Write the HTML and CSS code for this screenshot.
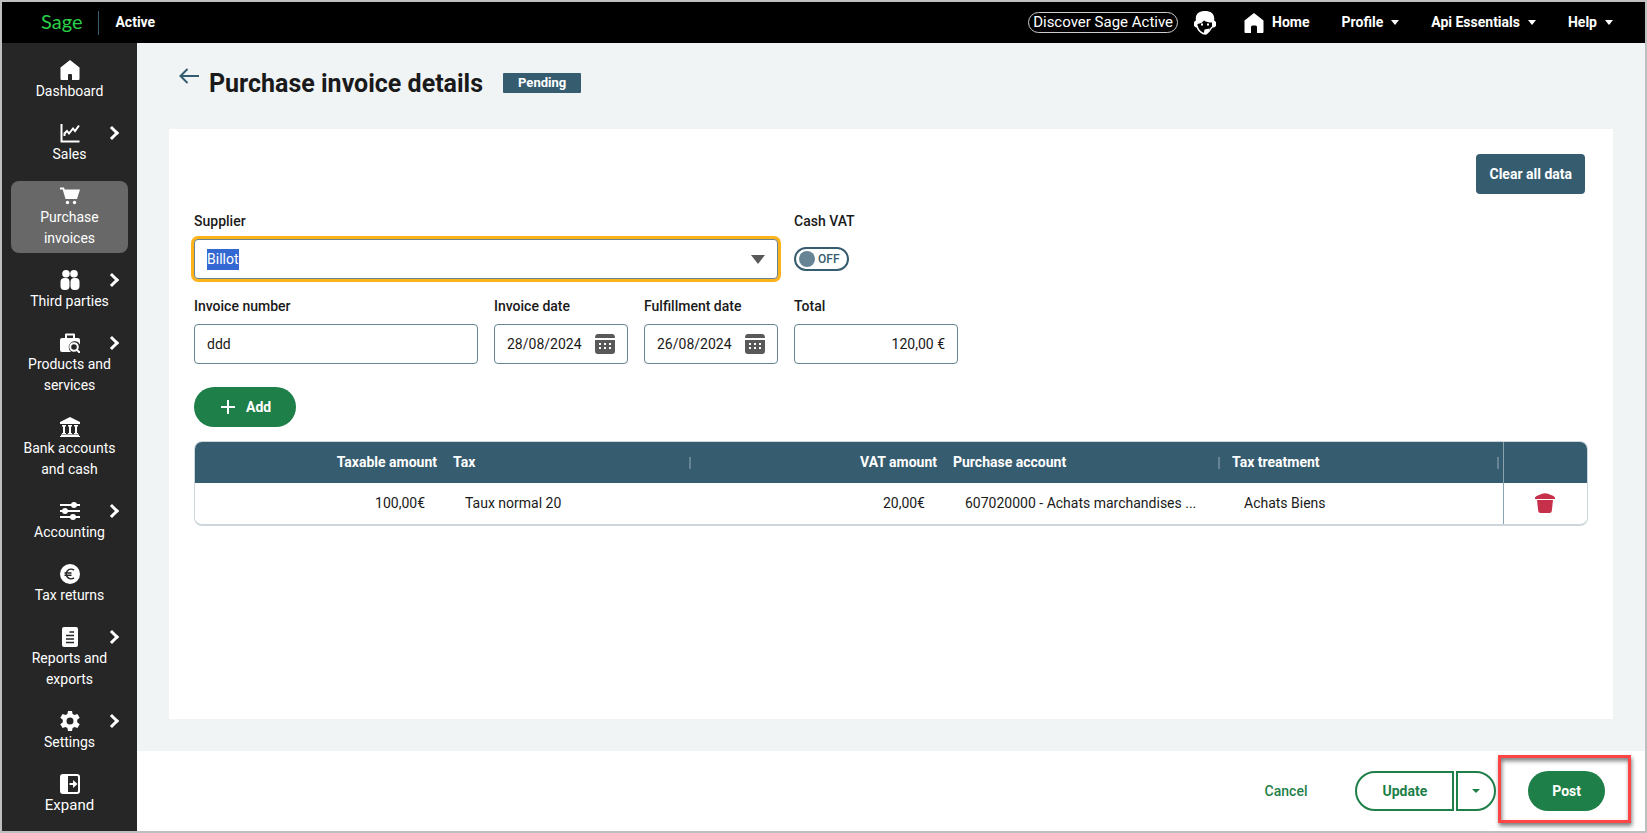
FILE: index.html
```html
<!DOCTYPE html>
<html lang="en">
<head>
<meta charset="utf-8">
<title>Purchase invoice details</title>
<link rel="stylesheet" href="styles.css">
</head>
<body>
<div class="app">
  <header class="topbar">
    <a class="logo" href="#">Sage</a>
    <span class="product">Active</span>
    <nav class="topnav" aria-label="Account">
      <a class="discover" href="#">Discover Sage Active</a>
      <button class="agent" type="button" aria-label="Support">
        <svg width="22" height="24" viewBox="0 0 22 24"><path fill="#fff" d="M11 0C5.500 0 2 2.500 1.800 7v2.500L0 11v4l2 1.500h1.500V13c3-.3 5-1.500 6.500-3.500 2 1.500 5 2 8 2V16.500H20l2-1.500v-4l-1.800-1.500V7C20 2.500 16.500 0 11 0z"/><path fill="none" stroke="#fff" stroke-width="1.500" d="M3 15c1 4 3 6 6 7.500h3c3-1.500 4.500-3.500 6-6.500"/><path fill="#fff" d="M7 12.500h2v2H7zM13 12.500h2v2h-2zM10.500 18.500l5-1v3l-3 3h-3z"/></svg>
      </button>
      <a class="toplink home" href="#"><svg width="20" height="20" viewBox="0 0 20 20"><path d="M10 0 .5 7.500V19q0 1 1 1H7v-6q0-1.500 1.500-1.500h3Q13 12.500 13 14v6h5.500q1 0 1-1V7.500z" fill="#fff"/></svg>Home</a>
      <button class="toplink menu" type="button">Profile</button>
      <button class="toplink menu" type="button">Api Essentials</button>
      <button class="toplink menu" type="button">Help</button>
    </nav>
  </header>
  <div class="body">
    <nav class="sidebar" aria-label="Main">
      <a class="item" href="#"><svg class="icon" viewBox="0 0 20 20"><path d="M10 0 .5 7.500V19q0 1 1 1H8v-5q0-1 1-1h2q1 0 1 1v5h6.500q1 0 1-1V7.500z"/></svg>Dashboard</a>
      <a class="item more" href="#"><svg class="icon" viewBox="0 0 20 20"><path class="line" d="M1.500 1v17.500h18M4.500 13V10.500l2.500-2.500 2 2.500 4-5 2 2.500 4-5.500"/></svg>Sales</a>
      <a class="item active" href="#" aria-current="page"><svg class="icon" viewBox="0 0 20 20"><path d="M0 1.500h4l.7 2H20L17 13H5.500L2.700 3.500H0z"/><circle cx="7.500" cy="16.500" r="1.700"/><circle cx="14.500" cy="16.500" r="1.700"/></svg>Purchase<br>invoices</a>
      <a class="item more" href="#"><svg class="icon" viewBox="0 0 20 20"><circle cx="6" cy="3.800" r="3.800"/><circle cx="14" cy="3.800" r="3.800"/><path d="M.5 12q0-4 4-4h1.500q3.500 0 3.500 4v4q0 4-4 4h-1q-4 0-4-4zM10.500 12q0-4 4-4h1q4 0 4 4v4q0 4-4 4h-1q-4 0-4-4z"/></svg>Third parties</a>
      <a class="item more" href="#"><svg class="icon" viewBox="0 0 20 20"><path fill-rule="evenodd" d="M5 5V1.500Q5 .5 6 .5h8q1 0 1 1V5h3q2 0 2 2v4.500A6 6 0 1 0 11 19H2q-2 0-2-2V7q0-2 2-2zm2 0h6V2.500H7z"/><circle class="line" cx="14" cy="14" r="3.800"/><path class="line" d="m17 17 3 3"/></svg>Products and<br>services</a>
      <a class="item" href="#"><svg class="icon" viewBox="0 0 20 20"><path d="M10 0 20 5v2H0V5zM2 8h4v1.500H5V16h1v1H2v-1h1V9.500H2zm6 0h4v1.500h-1V16h1v1H8v-1h1V9.500H8zm6 0h4v1.500h-1V16h1v1h-4v-1h1V9.500h-1zM1 17.500h18V19h1v1H0v-1h1z"/></svg>Bank accounts<br>and cash</a>
      <a class="item more" href="#"><svg class="icon" viewBox="0 0 20 20"><path class="line" d="M0 4h20M0 10h20M0 16h20"/><circle cx="14" cy="4" r="3"/><circle cx="5" cy="10" r="3"/><circle cx="13" cy="16" r="3"/></svg>Accounting</a>
      <a class="item" href="#"><svg class="icon" viewBox="0 0 20 20"><circle cx="10" cy="10" r="10"/><path class="cut" d="M14 6.200A4.800 4.800 0 1 0 14 13.800M4.500 9h7M4.500 11.300h7"/></svg>Tax returns</a>
      <a class="item more" href="#"><svg class="icon" viewBox="0 0 20 20"><rect x="2" width="16" height="20" rx="2"/><path class="cut" d="M9.500 5H14M6 8.500h8M6 12h8M6 15.500h8"/></svg>Reports and<br>exports</a>
      <a class="item more" href="#"><svg class="icon" viewBox="0 0 20 20"><path fill-rule="evenodd" d="M8 0h4l.6 3 1.900 1.100 2.900-1 2.300 3.700-2.500 2v2.400l2.500 2-2.300 3.700-2.900-1-1.900 1.100L12 20H8l-.6-3-1.900-1.100-2.900 1L.3 13.200l2.500-2V8.800l-2.500-2 2.300-3.700 2.900 1L7.400 3zm2 6.500a3.500 3.500 0 1 0 0 7 3.500 3.500 0 0 0 0-7z"/></svg>Settings</a>
      <a class="item expand" href="#"><svg class="icon" viewBox="0 0 20 20"><rect class="line" x="1" y="1" width="18" height="18" rx="2"/><path d="M1 1h7v18H1zM9.500 9H13V6l4.500 4-4.500 4v-3H9.500z"/></svg>Expand</a>
    </nav>
    <div class="page">
      <main class="content">
        <div class="heading">
          <a class="back" href="#" aria-label="Back"><svg width="20" height="16" viewBox="0 0 20 16"><path fill="none" stroke="#365c70" stroke-width="2" d="M20 8H1.500M8.500 1l-7 7 7 7"/></svg></a>
          <h1>Purchase invoice details</h1>
          <span class="badge">Pending</span>
        </div>
        <section class="card">
          <button class="clear" type="button">Clear all data</button>
          <form class="form">
            <div class="field supplier">
              <label for="supplier">Supplier</label>
              <div class="box focus">
                <input id="supplier" type="text" role="combobox" aria-expanded="false" value="Billot" autofocus>
                <button class="drop" type="button" aria-label="Open list"></button>
              </div>
            </div>
            <div class="field">
              <label for="cash">Cash VAT</label>
              <span class="switch"><input id="cash" type="checkbox" role="switch"><span class="knob"></span><span>OFF</span></span>
            </div>
            <div class="field number">
              <label for="number">Invoice number</label>
              <div class="box"><input id="number" type="text" value="ddd"></div>
            </div>
            <div class="field">
              <label for="invdate">Invoice date</label>
              <div class="box date"><input id="invdate" type="text" value="28/08/2024"><button type="button" aria-label="Pick invoice date"><svg width="20" height="20" viewBox="0 0 20 20"><path fill="#595959" d="M0 4q0-4 3-4h14q3 0 3 4zM0 6h20v11q0 3-3 3H3q-3 0-3-3z"/><path fill="#fff" d="M4 9h2v2H4zm5 0h2v2H9zm5 0h2v2h-2zM4 13h2v2H4zm5 0h2v2H9zm5 0h2v2h-2z"/></svg></button></div>
            </div>
            <div class="field">
              <label for="fuldate">Fulfillment date</label>
              <div class="box date"><input id="fuldate" type="text" value="26/08/2024"><button type="button" aria-label="Pick fulfillment date"><svg width="20" height="20" viewBox="0 0 20 20"><path fill="#595959" d="M0 4q0-4 3-4h14q3 0 3 4zM0 6h20v11q0 3-3 3H3q-3 0-3-3z"/><path fill="#fff" d="M4 9h2v2H4zm5 0h2v2H9zm5 0h2v2h-2zM4 13h2v2H4zm5 0h2v2H9zm5 0h2v2h-2z"/></svg></button></div>
            </div>
            <div class="field">
              <label for="total">Total</label>
              <div class="box total"><input id="total" type="text" value="120,00 €"></div>
            </div>
          </form>
          <button class="btn solid add" type="button"><svg width="14" height="14" viewBox="0 0 14 14"><path stroke="#fff" stroke-width="2" d="M7 0v14M0 7h14"/></svg>Add</button>
          <div class="tablewrap">
            <table>
              <colgroup><col class="w-std"><col class="w-std"><col class="w-std"><col><col><col class="w-act"></colgroup>
              <thead>
                <tr><th class="num">Taxable amount</th><th class="sep">Tax</th><th class="num">VAT amount</th><th class="sep">Purchase account</th><th class="sep">Tax treatment</th><th class="act" aria-label="Actions"></th></tr>
              </thead>
              <tbody>
                <tr><td class="num">100,00€</td><td>Taux normal 20</td><td class="num">20,00€</td><td>607020000 - Achats marchandises ...</td><td>Achats Biens</td><td class="act"><button type="button" aria-label="Delete line"><svg width="20" height="20" viewBox="0 0 20 20"><path fill="#c7304b" d="M0 6V4.500Q1 2.500 4 2L7 .8Q10-.4 13 .8L16 2q3 .5 4 2.500V6zM2 7h16L16.800 18q-.2 2-2.300 2h-9q-2.100 0-2.300-2z"/></svg></button></td></tr>
              </tbody>
            </table>
          </div>
        </section>
      </main>
      <footer class="actions">
        <button class="cancel" type="button">Cancel</button>
        <div class="split">
          <button class="btn outline main" type="button">Update</button>
          <button class="btn outline more-actions" type="button" aria-label="More update options"></button>
        </div>
        <div class="post">
          <button class="btn solid" type="button">Post</button>
          <span class="marker"></span>
        </div>
      </footer>
    </div>
  </div>
</div>
<script src="page.js"></script>
</body>
</html>
```

FILE: styles.css
```css
*, *::after { box-sizing: border-box; }

body {
  margin: 0;
  font: 14px/21px Roboto, "Liberation Sans", sans-serif;
  color: #1a1a1a;
}

button, input { font: inherit; color: inherit; }
button { border: 0; padding: 0; background: none; cursor: pointer; }
a { color: inherit; text-decoration: none; }
svg { display: block; flex: none; }

.app {
  min-height: 100vh;
  display: flex;
  flex-direction: column;
  border: 2px solid #bfbfbf;
}

/* top bar */
.topbar {
  display: flex;
  align-items: center;
  height: 41px;
  padding: 0 32px 0 39px;
  background: #000;
  color: #fff;
}
.logo {
  padding: 0 16px 4px 0;
  color: #2bd14a;
  font: 20px/20px Lato, sans-serif;
  border-right: 1px solid #365c70;
}
.product { padding-left: 16px; font-size: 14px; font-weight: 700; }
.topnav { display: flex; align-items: center; margin-left: auto; }
.discover {
  padding: 0 4px;
  margin-right: 16px;
  font-size: 15px;
  line-height: 19px;
  border: 1px solid #ccc;
  border-radius: 11px;
}
.agent { margin-right: 28px; }
.toplink { display: flex; align-items: center; gap: 8px; font-size: 14px; font-weight: 700; }
.toplink + .toplink { margin-left: 32px; }
.menu::after {
  content: "";
  border: 4px solid transparent;
  border-top: 5px solid #fff;
  border-bottom: 0;
}

.body { flex: 1; display: flex; }

/* sidebar */
.sidebar {
  flex: 0 0 135px;
  display: flex;
  flex-direction: column;
  gap: 12px;
  padding: 12px 9px 8px;
  background: #262626;
  color: #fff;
}
.item {
  position: relative;
  display: block;
  padding: 5px 0 4px;
  text-align: center;
  border-radius: 8px;
}
.item.active { background: #686868; }
.icon { width: 20px; height: 20px; margin: 0 auto 1px; fill: #fff; }
.icon .line { fill: none; stroke: #fff; stroke-width: 2; }
.icon .cut { fill: none; stroke: #262626; stroke-width: 1.500; }
.more::after {
  content: "";
  position: absolute;
  top: 10px;
  right: 11px;
  width: 10px;
  height: 10px;
  border: solid #fff;
  border-width: 3px 3px 0 0;
  transform: rotate(45deg);
}
.item.expand { font-size: 15px; }

/* page */
.page { flex: 1; min-width: 0; display: flex; flex-direction: column; }
.content {
  flex: 1;
  display: flex;
  flex-direction: column;
  padding: 24px 32px 32px;
  background: #f0f4f5;
}
.heading { display: flex; align-items: center; height: 32px; padding-left: 10px; }
.back { padding-bottom: 14px; }
h1 { margin: 0 20px 0 10px; padding-top: 2px; font-size: 25px; line-height: 32px; font-weight: 700; }
.badge {
  padding: 0 15px;
  background: #365c70;
  color: #fff;
  font-size: 13px;
  line-height: 20px;
  font-weight: 700;
  border-radius: 1px;
}
.card {
  flex: 1;
  display: flex;
  flex-direction: column;
  align-items: flex-start;
  margin-top: 30px;
  padding: 25px;
  background: #fff;
}
.clear {
  align-self: flex-end;
  height: 40px;
  margin-right: 3px;
  padding: 0 13px;
  background: #365c70;
  color: #fff;
  font-weight: 700;
  border-radius: 4px;
}

/* form */
.form {
  display: grid;
  grid-template-columns: 284px 134px 134px 164px;
  gap: 17px 16px;
  margin-top: 17px;
}
.field label { display: block; margin-bottom: 7px; font-weight: 500; }
.supplier { grid-column: span 3; }
.box {
  display: flex;
  align-items: center;
  height: 40px;
  padding: 0 12px;
  border: 1px solid #668494;
  border-radius: 4px;
  background: #fff;
}
.box input { flex: 1; min-width: 0; padding: 0; border: 0; outline: 0; background: none; }
.box.focus { box-shadow: 0 0 0 3px #ffb31a; }
.box input::selection { background: #3367d1; color: #fff; }
.box.total input { text-align: right; }
.drop {
  border: 7px solid transparent;
  border-top: 9px solid #595959;
  border-bottom: 0;
}
.switch {
  position: relative;
  display: flex;
  align-items: center;
  gap: 3px;
  width: 55px;
  height: 24px;
  margin-top: 15px;
  padding: 0 3px;
  border: 2px solid #365c70;
  border-radius: 12px;
  color: #365c70;
  font-size: 12px;
  font-weight: 500;
}
.switch input { position: absolute; inset: 0; width: 100%; height: 100%; margin: 0; opacity: 0; }
.knob { width: 16px; height: 16px; border-radius: 50%; background: #668494; }

/* buttons */
.btn {
  display: flex;
  align-items: center;
  justify-content: center;
  height: 40px;
  padding: 0 24px;
  border-radius: 20px;
  font-weight: 700;
}
.solid { background: #1e7f48; color: #fff; }
.outline { border: 2px solid #1e7f48; color: #1e7f48; }
.add { gap: 11px; margin-top: 23px; padding: 0 25px 0 27px; }

/* table */
.tablewrap {
  align-self: stretch;
  margin-top: 14px;
  border: 1px solid #ccd6db;
  border-bottom-width: 2px;
  border-radius: 8px;
  overflow: hidden;
}
table { width: 100%; table-layout: fixed; border-collapse: separate; border-spacing: 0; }
.w-std { width: 250px; }
.w-act { width: 84px; }
th, td { height: 41px; text-align: left; white-space: nowrap; overflow: hidden; }
th { padding: 0 8px; background: #365c70; color: #fff; font-weight: 700; }
td { padding: 0 20px; }
.num { text-align: right; }
.sep {
  background: linear-gradient(#668494, #668494) right 4px center / 2px 12px no-repeat #365c70;
}
.act { padding: 0 2px 2px 0; border-left: 1px solid #8ba3af; }
.act button { display: block; margin: 0 auto; }

/* footer */
.actions {
  display: flex;
  align-items: center;
  justify-content: flex-end;
  height: 80px;
  padding-right: 40px;
  background: #fff;
}
.cancel { margin-right: 48px; color: #1e7f48; font-weight: 500; }
.split { display: flex; gap: 2px; margin-right: 32px; }
.main { padding: 0 25px; border-radius: 20px 0 0 20px; }
.more-actions { width: 40px; padding: 0; border-radius: 0 20px 20px 0; }
.more-actions::after {
  content: "";
  border: 4px solid transparent;
  border-top-color: #1e7f48;
  border-bottom: 0;
}
.post { position: relative; }
.marker {
  position: absolute;
  inset: -16px -26px -12px -30px;
  border: 3px solid #ff4545;
  box-shadow: 1px 3px 4px rgba(0, 0, 0, .5), inset 1px 3px 4px rgba(0, 0, 0, .5);
  pointer-events: none;
}
```

FILE: page.js
```js
const supplier = document.getElementById("supplier");
supplier.focus();
supplier.select();
```
